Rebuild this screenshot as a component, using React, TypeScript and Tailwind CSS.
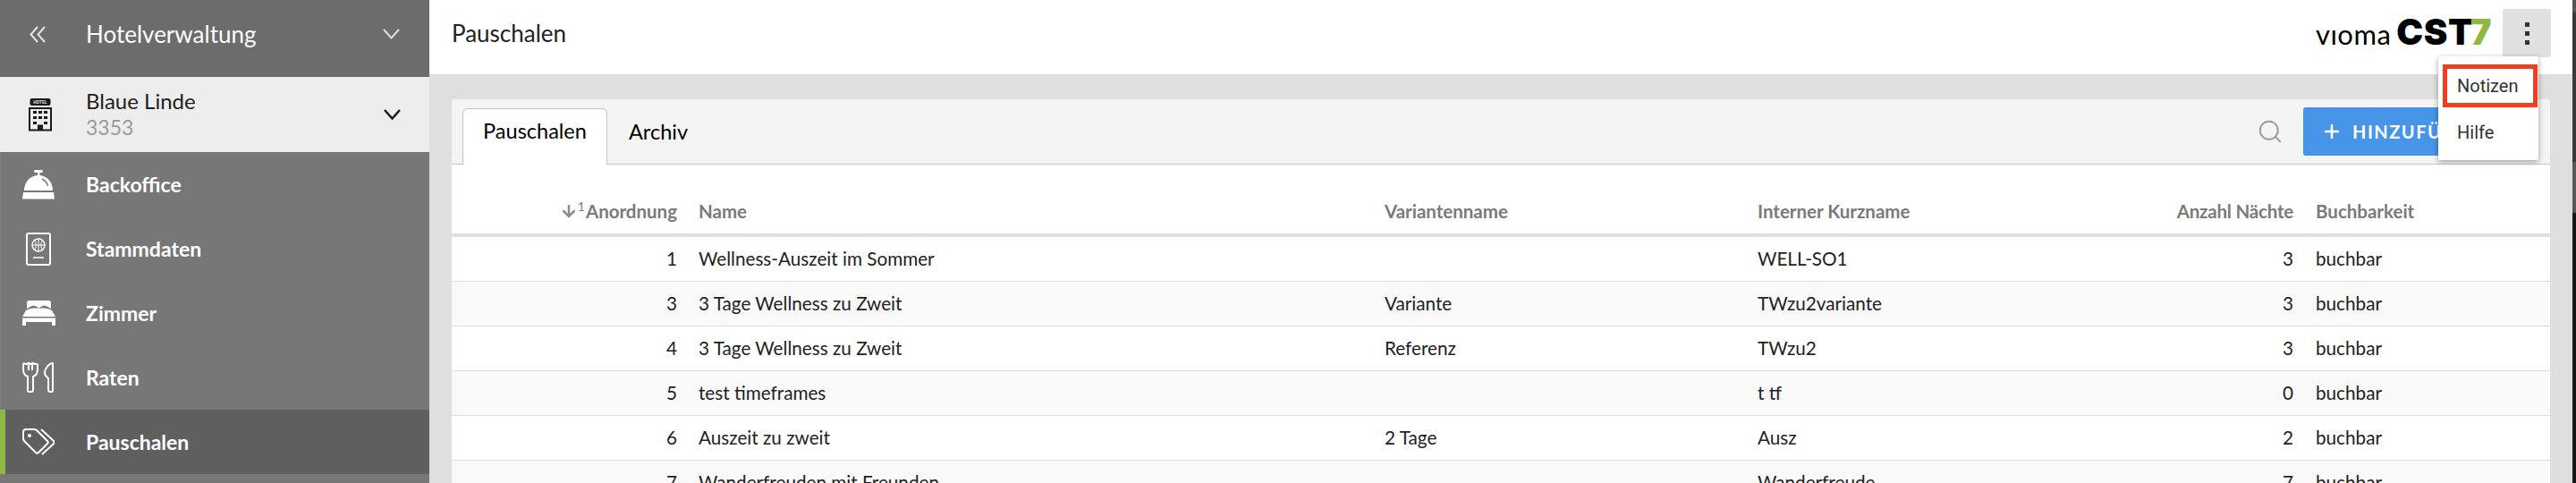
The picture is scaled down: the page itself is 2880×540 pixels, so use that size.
import React from "react";
import { Search, Plus, ArrowDown } from "lucide-react";

const HotelIcon = () => (
  <svg width="28" height="37" viewBox="0 0 28 37" fill="#1a1a1a">
    <rect x="2.5" y="0" width="23" height="8" rx="2" />
    <text x="14" y="6" fontSize="4.6" fontWeight="700" textAnchor="middle" fill="#ededed" fontFamily="Liberation Sans">HOTEL</text>
    <path fillRule="evenodd" d="M1 10h26v26.500H1zM3 12v22.500h8v-5h6v5h8V12z" />
    <path d="M6 14h4v3H6zM12 14h4v3h-4zM18 14h4v3h-4zM6 20h4v3H6zM12 20h4v3h-4zM18 20h4v3h-4zM6 26h4v3H6zM18 26h4v3h-4z" />
  </svg>
);
const Bell = () => (
  <svg width="36" height="33" viewBox="0 0 36 33" fill="white">
    <rect x="13" y="0" width="10" height="3" rx="1.500" />
    <rect x="17" y="2" width="2.500" height="4" />
    <path d="M2 23C2 13 9 6 18 6s16 7 16 17z" />
    <path d="M22 10c3.500 1.500 5.500 4 6.500 8" stroke="#777" strokeWidth="1.500" fill="none" />
    <path d="M1 25h34l1 7.500H0z" />
  </svg>
);
const Passport = () => (
  <svg width="28" height="37" viewBox="0 0 28 37" fill="none" stroke="white" strokeWidth="2">
    <rect x="1" y="1" width="26" height="35" rx="2" />
    <circle cx="14" cy="14" r="7" strokeWidth="1.500" />
    <path d="M7 14h14M14 7v14M10 9c1.500 3 1.500 7 0 10M18 9c-1.500 3-1.500 7 0 10" strokeWidth="1" />
    <path d="M8 28h12" strokeWidth="1.500" />
  </svg>
);
const Bed = () => (
  <svg width="37" height="28" viewBox="0 0 37 28" fill="white">
    <path d="M5 2.500C5 1 6 0 7.500 0h22C31 0 32 1 32 2.500V9c-3-1.500-6-4-9-3-2 .5-3.500 2-4.500 3-1-1-2.500-2.500-4.500-3-3-1-6 1.500-9 3z" />
    <path d="M4 11c4-2 7-3 14.500-2 7-1 11 0 14.500 2l4 7H0z" />
    <path d="M0 19.500h37V28h-4v-4H4v4H0z" />
  </svg>
);
const Cutlery = () => (
  <svg width="36" height="34" viewBox="0 0 36 34" fill="none" stroke="white" strokeWidth="2" strokeLinejoin="round">
    <path d="M1 2c0-1 2-1 2 0h3V1h2v1h3V1h2v1h3c.5 0 1 .5 1 1v5c0 4-2 7-5 8v15c0 1-1 2-2 2H7c-1 0-1-1-1-2V16C3 15 1 12 1 8z" />
    <path d="M7 3v6M11 3v6" />
    <path d="M34 1c-4 0-9 6-9 11 0 3 3 5 4 6v13c0 1 1 2 2 2h2c1 0 1-1 1-2V3c0-1 0-2 0-2z" />
  </svg>
);
const Tags = () => (
  <svg width="36" height="30" viewBox="0 0 36 30" fill="none" stroke="white" strokeWidth="2" strokeLinejoin="round">
    <path d="M1 4c0-2 1-3 3-3h9c1 0 2 .5 3 1l12 12c1 1 1 2 0 3L18 27c-1 1-2 1-3 0L2 14c-.5-.5-1-1.500-1-3z" />
    <circle cx="8" cy="8" r="2" fill="white" stroke="none" />
    <path d="M21 1l14 13c1 1 1 2 0 3L22 29" />
  </svg>
);

const rows = [
  ["1", "Wellness-Auszeit im Sommer", "", "WELL-SO1", "3"],
  ["3", "3 Tage Wellness zu Zweit", "Variante", "TWzu2variante", "3"],
  ["4", "3 Tage Wellness zu Zweit", "Referenz", "TWzu2", "3"],
  ["5", "test timeframes", "", "t tf", "0"],
  ["6", "Auszeit zu zweit", "2 Tage", "Ausz", "2"],
  ["7", "Wanderfreuden mit Freunden", "", "Wanderfreude", "7"],
];

const NavItem = ({ icon, label, active }: { icon: React.ReactNode; label: string; active?: boolean }) => (
  <div className={`flex h-[72px] shrink-0 items-center ${active ? "border-l-[6px] border-[#8fb843] bg-[#5f5f5f]" : "border-l border-[#808080]"}`}>
    <div className={`flex items-center justify-center ${active ? "w-[74px]" : "w-[84px]"}`}>{icon}</div>
    <span className={`text-[23px] font-bold text-white ${active ? "pl-[16px]" : "pl-[11px]"}`}>{label}</span>
  </div>
);

export default function App() {
  return (
    <div className="flex h-[540px] w-[2880px] overflow-hidden bg-[#dfdfdf] font-['Lato',sans-serif]">
      <aside className="flex w-[480px] shrink-0 flex-col bg-[#777777]">
        <div className="flex h-[86px] shrink-0 items-center bg-[#6c6c6c] pb-[10px] pl-[33px] pr-[33px]">
          <svg width="18" height="19" viewBox="0 0 18 19" fill="none" stroke="#e4e4e4" strokeWidth="2">
            <path d="M9 1 1.500 9.500 9 18M17 1 9.500 9.500 17 18" />
          </svg>
          <span className="ml-[45px] flex-1 text-[26px] text-white">Hotelverwaltung</span>
          <svg width="19" height="12" viewBox="0 0 19 12" fill="none" stroke="#dddddd" strokeWidth="2">
            <path d="M1 1l8.500 9.500L18 1" />
          </svg>
        </div>
        <div className="flex h-[84px] shrink-0 items-center bg-[#ededed] pl-[31px] pr-[32px]">
          <HotelIcon />
          <div className="ml-[37px] flex-1">
            <div className="text-[24px] leading-[28px] text-[#1e1e1e]">Blaue Linde</div>
            <div className="text-[23px] leading-[30px] text-[#9b9b9b]">3353</div>
          </div>
          <svg width="19" height="12" viewBox="0 0 19 12" fill="none" stroke="#1a1a1a" strokeWidth="2.500">
            <path d="M1 1l8.500 9.500L18 1" />
          </svg>
        </div>
        <NavItem icon={<Bell />} label="Backoffice" />
        <NavItem icon={<Passport />} label="Stammdaten" />
        <NavItem icon={<Bed />} label="Zimmer" />
        <NavItem icon={<Cutlery />} label="Raten" />
        <NavItem icon={<Tags />} label="Pauschalen" active />
      </aside>
      <main className="relative flex min-w-0 flex-1 flex-col">
        <header className="flex h-[83px] shrink-0 items-start bg-white pl-[25px] pr-[24px] pt-[10px]">
          <h1 className="flex-1 pt-[11px] text-[26px] font-normal leading-[32px] text-[#222222]">Pauschalen</h1>
          <div className="mr-[12px] mt-[7px] flex items-baseline gap-[6px] leading-[38px]">
            <span className="text-[31px] tracking-[0.500px] text-black">vıoma</span>
            <span className="font-['Inter',sans-serif] text-[40px] font-black tracking-[0.500px] text-black">
              CST<span className="text-[#8fb843]">7</span>
            </span>
          </div>
          <button className="flex h-[54px] w-[54px] flex-col items-center justify-center gap-[5px] rounded-[3px] bg-[#e0e0e0]">
            <span className="h-[5px] w-[5px] bg-[#333333]" />
            <span className="h-[5px] w-[5px] bg-[#333333]" />
            <span className="h-[5px] w-[5px] bg-[#333333]" />
          </button>
        </header>
        <div className="flex-1 pl-[25px] pr-[25px] pt-[28px]">
          <section className="overflow-hidden rounded-t-[4px] bg-white">
            <div className="flex h-[73px] items-end justify-between border-b border-[#c4c4c4] bg-[#f4f4f4] pl-[12px]">
              <div className="flex h-[62px] items-stretch text-[23.500px]">
                <div className="relative -mb-px w-[162px] rounded-t-[6px] border border-b-0 border-[#c4c4c4] bg-white pt-[9px] text-center leading-[30px] text-black">Pauschalen</div>
                <div className="px-[24px] pt-[11px] leading-[30px] text-black">Archiv</div>
              </div>
              <div className="flex items-center self-center pr-[16px]">
                <Search size={30} className="mr-[22px] text-[#9a9a9a]" strokeWidth={1.500} />
                <div className="flex h-[54px] w-[260px] items-center rounded-[3px] bg-[#4695e8] pl-[20px] text-white">
                  <Plus size={24} strokeWidth={2.500} />
                  <span className="ml-[11px] text-[20px] font-bold tracking-[1.500px]">HINZUFÜGEN</span>
                </div>
              </div>
            </div>
            <div className="flex h-[81px] items-end border-b-[4px] border-[#dfdfdf] pb-[11px] text-[20.500px] font-bold leading-[28px] text-[#7a7a7a]">
              <div className="flex w-[264px] items-center justify-end pr-[12px]">
                <ArrowDown size={20} strokeWidth={3} className="text-[#8c8c8c]" />
                <span className="mb-[10px] mr-[1px] text-[14px] font-normal leading-none">1</span>Anordnung
              </div>
              <div className="w-[767px] pl-[12px]">Name</div>
              <div className="w-[417px] pl-[12px]">Variantenname</div>
              <div className="w-[417px] pl-[12px]">Interner Kurzname</div>
              <div className="w-[207px] pr-[13px] text-right tracking-[-0.200px]">Anzahl Nächte</div>
              <div className="pl-[12px]">Buchbarkeit</div>
            </div>
            {rows.map((r, i) => (
              <div key={i} className={`flex h-[50px] items-center border-b border-[#dedede] text-[20.700px] text-[#222222] ${i % 2 ? "bg-[#f9f9f9]" : "bg-white"}`}>
                <div className="w-[264px] pr-[12px] text-right">{r[0]}</div>
                <div className="w-[767px] pl-[12px]">{r[1]}</div>
                <div className="w-[417px] pl-[12px]">{r[2]}</div>
                <div className="w-[417px] pl-[12px]">{r[3]}</div>
                <div className="w-[207px] pr-[13px] text-right">{r[4]}</div>
                <div className="pl-[12px]">buchbar</div>
              </div>
            ))}
          </section>
        </div>
        <div className="absolute right-[38px] top-[63px] w-[112px] rounded-[2px] bg-white pb-[3px] pl-[5px] pr-[1px] pt-[9px] font-['Roboto',sans-serif] text-[20px] text-[#333333] shadow-[0_2px_6px_rgba(0,0,0,0.35)]">
          <div className="flex h-[48px] items-center border-[5px] border-[#ee3f22] pl-[11px]">Notizen</div>
          <div className="flex h-[56px] items-center pl-[16px]">Hilfe</div>
        </div>
      </main>
      <div className="flex w-[4px] shrink-0 flex-col">
        <div className="h-[14px] bg-[#555555]" />
        <div className="h-[167px] bg-[#3a3a3a]" />
        <div className="h-[57px] bg-[#585858]" />
        <div className="flex-1 bg-[#161616]" />
      </div>
    </div>
  );
}
